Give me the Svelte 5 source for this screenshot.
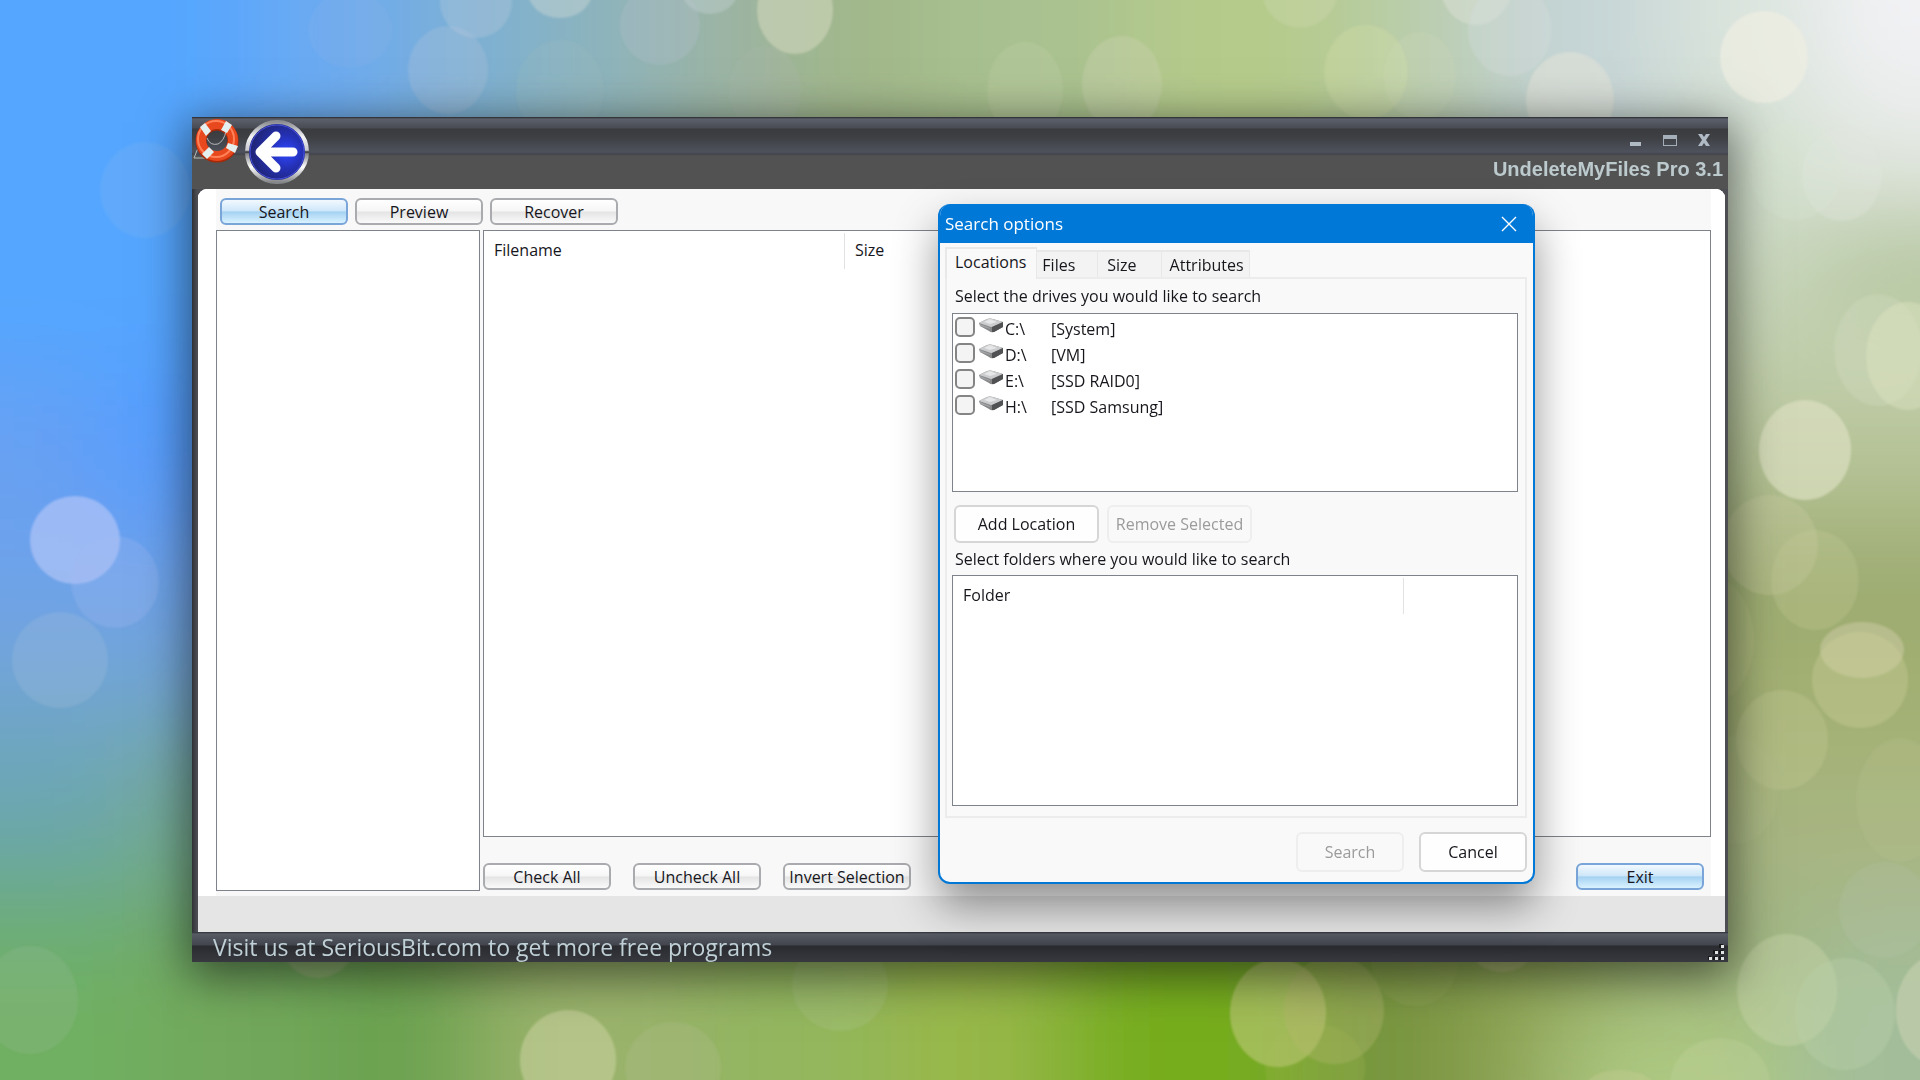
<script lang="ts">
  type Drive = { letter: string; label: string; checked: boolean };

  let drives: Drive[] = $state([
    { letter: 'C:\\', label: '[System]', checked: false },
    { letter: 'D:\\', label: '[VM]', checked: false },
    { letter: 'E:\\', label: '[SSD RAID0]', checked: false },
    { letter: 'H:\\', label: '[SSD Samsung]', checked: false }
  ]);

  const tabs = ['Locations', 'Files', 'Size', 'Attributes'];
  let activeTab = $state('Locations');
  let dialogOpen = $state(true);

  // wallpaper colour patches: x, y, width, height, fill
  const patches: [number, number, number, number, string][] = [
    [-200, -200, 500, 660, '#55a6ff'],
    [260, -200, 150, 400, '#6dabf0'],
    [410, -200, 130, 400, '#7db0d2'],
    [540, -200, 120, 400, '#8db4bc'],
    [660, -200, 120, 400, '#9bb4a4'],
    [780, -200, 150, 400, '#a1b78a'],
    [930, -200, 200, 400, '#a9c190'],
    [1130, -200, 230, 400, '#b5cb8b'],
    [1360, -200, 130, 400, '#bacdae'],
    [1490, -200, 170, 400, '#c5d4d6'],
    [1660, -200, 160, 400, '#dae4dd'],
    [1820, -200, 300, 300, '#f2f2f5'],
    [1820, 100, 300, 130, '#e2e7e1'],
    [1660, 120, 160, 180, '#cfdcc8'],
    [1660, 280, 460, 130, '#c3d0b0'],
    [1660, 400, 460, 130, '#b6c396'],
    [1660, 520, 460, 140, '#9cab70'],
    [1660, 650, 460, 150, '#a4b174'],
    [1660, 790, 460, 150, '#a7b684'],
    [-200, 380, 330, 150, '#68a0f2'],
    [100, 380, 200, 190, '#549cff'],
    [-200, 520, 500, 120, '#6ea3ea'],
    [-200, 630, 500, 110, '#72a5d4'],
    [-200, 730, 350, 150, '#6ca6b4'],
    [130, 730, 170, 220, '#76a992'],
    [-200, 860, 400, 100, '#6cab80'],
    [-200, 940, 380, 340, '#6fb062'],
    [150, 900, 180, 380, '#72a85c'],
    [320, 900, 160, 380, '#6ba24f'],
    [480, 900, 220, 380, '#9ab36c'],
    [700, 900, 180, 380, '#93b65e'],
    [880, 900, 180, 380, '#98b84a'],
    [1060, 900, 250, 380, '#76ad1c'],
    [1310, 900, 150, 380, '#789440'],
    [1460, 900, 170, 380, '#8da253'],
    [1560, 1000, 240, 280, '#adc982'],
    [1640, 900, 160, 100, '#9db17a'],
    [1790, 930, 330, 350, '#a3bd9a']
  ];

  // bokeh discs: cx, cy, rx, ry, fill, opacity
  const discs: [number, number, number, number, string, number][] = [
    [75, 540, 45, 44, '#bccaf8', 0.6],
    [115, 582, 44, 46, '#a8bcf4', 0.25],
    [60, 660, 48, 48, '#a8c0dc', 0.26],
    [30, 1000, 48, 54, '#a0c0a0', 0.2],
    [145, 190, 45, 48, '#8cb8ec', 0.2],
    [448, 70, 40, 44, '#b4c4dc', 0.3],
    [476, 2, 36, 36, '#b8c8dc', 0.35],
    [350, 30, 42, 38, '#9ab8e4', 0.15],
    [560, -8, 32, 26, '#ccd8d4', 0.45],
    [560, 90, 44, 50, '#a0bcbc', 0.2],
    [660, 25, 40, 40, '#b4c0cc', 0.3],
    [710, -10, 28, 24, '#ccd6dc', 0.35],
    [795, 10, 38, 44, '#ccd4b8', 0.65],
    [765, 90, 36, 44, '#b0b8b0', 0.2],
    [1025, 90, 38, 48, '#c8d4ac', 0.25],
    [1122, 84, 40, 48, '#d4d8b8', 0.3],
    [1300, -10, 38, 38, '#ccd8ac', 0.4],
    [1366, 72, 42, 47, '#d0dca4', 0.4],
    [1420, 76, 36, 44, '#d4dcc0', 0.2],
    [1476, -15, 36, 40, '#dce0d4', 0.5],
    [1510, 30, 42, 46, '#d4dcdc', 0.35],
    [1570, 100, 44, 48, '#e4e4d8', 0.55],
    [1764, 57, 44, 46, '#eeeee2', 0.75],
    [1842, 175, 40, 46, '#e4e8e0', 0.3],
    [1795, 170, 46, 50, '#dce6d4', 0.22],
    [1805, 450, 46, 50, '#dee2c4', 0.65],
    [1878, 350, 44, 56, '#dce2cc', 0.25],
    [1908, 356, 42, 54, '#e0e6c4', 0.4],
    [1770, 545, 48, 50, '#cfd2a8', 0.28],
    [1862, 650, 42, 28, '#d8d0b0', 0.45],
    [1860, 680, 48, 48, '#ced09c', 0.36],
    [1815, 580, 44, 50, '#ccd09c', 0.25],
    [1708, 640, 46, 64, '#bcc48c', 0.22],
    [1782, 740, 46, 50, '#c8cc98', 0.3],
    [1735, 790, 44, 54, '#b8c090', 0.18],
    [1900, 800, 44, 62, '#bcc898', 0.2],
    [1885, 910, 46, 48, '#b8c4ac', 0.22],
    [1787, 990, 50, 56, '#c8d4a8', 0.45],
    [1845, 1014, 50, 56, '#bed0ac', 0.35],
    [1940, 1010, 44, 56, '#ccd4b4', 0.55],
    [1278, 1013, 48, 54, '#c4cc80', 0.55],
    [1334, 1010, 50, 54, '#b4b870', 0.36],
    [1502, 950, 30, 22, '#b8b888', 0.4],
    [1415, 960, 44, 46, '#98a860', 0.25],
    [1315, 1068, 50, 44, '#a8bc58', 0.2],
    [1620, 1090, 36, 20, '#cccf94', 0.35],
    [1720, 1084, 50, 46, '#bfd29c', 0.35],
    [568, 1060, 48, 50, '#c8d09c', 0.6],
    [673, 1068, 48, 46, '#aebc8c', 0.3],
    [840, 985, 48, 46, '#aec488', 0.28],
    [318, 940, 38, 38, '#b4b890', 0.35]
  ];
</script>

<svelte:head>
  <title>UndeleteMyFiles Pro 3.1</title>
</svelte:head>

{#snippet driveIcon()}
  <svg class="drive-icon" viewBox="0 0 24 16" aria-hidden="true">
    <path d="M0 5 L8 1 Q11 0 14 1 L24 4 L24 9 L15 14 Q12 15 10 13 L1 8 Z" fill="#858788" />
    <path d="M0 5 L8 1 Q11 0 14 1 L24 4 L13 9 Q11 9 9 8 Z" fill="#cacccd" />
    <path d="M5 4 L11 1 L18 4 L11 6 Z" fill="#e6e7e8" />
    <path d="M13 9 L24 4 L24 9 L15 14 L13 14 Z" fill="#4f5152" />
    <path d="M1 6 L11 10 L11 11 L1 8 Z" fill="#a2a4a5" />
  </svg>
{/snippet}

<div class="desktop">
  <svg class="wallpaper" viewBox="0 0 1920 1080" preserveAspectRatio="xMidYMid slice" aria-hidden="true">
    <defs>
      <filter id="soft" filterUnits="userSpaceOnUse" x="-300" y="-300" width="2520" height="1680">
        <feGaussianBlur stdDeviation="52" />
      </filter>
      <filter id="edge">
        <feGaussianBlur stdDeviation="1" />
      </filter>
    </defs>
    <rect width="1920" height="1080" fill="#9cb47c" />
    <g filter="url(#soft)">
      {#each patches as [x, y, w, h, fill]}
        <rect {x} {y} width={w} height={h} {fill} />
      {/each}
    </g>
    <g filter="url(#edge)">
      {#each discs as [cx, cy, rx, ry, fill, opacity]}
        <ellipse {cx} {cy} {rx} {ry} {fill} {opacity} />
      {/each}
    </g>
  </svg>

  <main class="window">
    <header class="titlebar">
      <svg class="app-icon" viewBox="0 0 46 44" aria-hidden="true">
        <path d="M5 29 L1 39 L22 39" fill="none" stroke="#b9bcbc" stroke-width="1" />
        <circle cx="24" cy="22" r="16" fill="none" stroke="#a82808" stroke-width="11" />
        <circle cx="24" cy="21" r="16" fill="none" stroke="#e8481e" stroke-width="10" />
        <circle cx="23" cy="20" r="18" fill="none" stroke="#ff8158" stroke-width="2" />
        <path d="M14 19 Q17 27 25 25 Q31 22 33 12" fill="none" stroke="#b4b8ba" stroke-width="1" />
        <g fill="#e4f0f0">
          <path d="M7 8 L12 4 L18 12 L13 17 Z" />
          <path d="M33 2 L39 6 L34 14 L28 11 Z" />
          <path d="M45 27 L42 34 L33 29 L35 24 Z" />
          <path d="M14 40 L9 35 L16 28 L21 33 Z" />
        </g>
      </svg>
      <button class="back" aria-label="Back">
        <svg viewBox="0 0 66 64" aria-hidden="true">
          <defs>
            <linearGradient id="rim" x2="0" y2="1">
              <stop offset="0" stop-color="#8b8d92" />
              <stop offset="0.25" stop-color="#f4f4f6" />
              <stop offset="0.47" stop-color="#c8cacd" />
              <stop offset="0.5" stop-color="#2c2d30" />
              <stop offset="0.53" stop-color="#85878b" />
              <stop offset="0.75" stop-color="#ffffff" />
              <stop offset="1" stop-color="#85878b" />
            </linearGradient>
            <radialGradient id="disc" cx="0.65" cy="0.5" r="0.55">
              <stop offset="0" stop-color="#3048ff" />
              <stop offset="0.5" stop-color="#2430b4" />
              <stop offset="1" stop-color="#20267c" />
            </radialGradient>
          </defs>
          <circle cx="33" cy="32" r="30" fill="url(#disc)" stroke="url(#rim)" stroke-width="4" />
          <circle cx="33" cy="32" r="27" fill="none" stroke="#4750d8" stroke-width="1" />
          <path
            d="M32 16 L16 32 L32 48 M17 32 H49"
            fill="none"
            stroke="#fff"
            stroke-width="9"
            stroke-linecap="round"
            stroke-linejoin="round"
          />
        </svg>
      </button>
      <div class="title-side">
        <div class="controls">
          <button aria-label="Minimize">
            <svg viewBox="0 0 14 14" aria-hidden="true"><path d="M1 9h11v4H1z" fill="#b0bac4" /></svg>
          </button>
          <button aria-label="Maximize">
            <svg viewBox="0 0 14 14" aria-hidden="true">
              <path d="M0 2h14v11H0z M1 6v6h12V6z" fill="#a4aeb8" fill-rule="evenodd" />
            </svg>
          </button>
          <button aria-label="Close">
            <svg viewBox="0 0 14 14" aria-hidden="true">
              <path d="M1 1h4l2 3 2-3h4L9 7l4 6H9L7 10l-2 3H1l4-6z" fill="#b0bac4" />
            </svg>
          </button>
        </div>
        <h1>UndeleteMyFiles Pro 3.1</h1>
      </div>
    </header>

    <section class="content">
      <div class="work">
        <nav class="toolbar">
          <button class="glossy blue" onclick={() => (dialogOpen = true)}>Search</button>
          <button class="glossy">Preview</button>
          <button class="glossy">Recover</button>
        </nav>
        <div class="split">
          <div class="tree"></div>
          <div class="results">
            <div class="file-list">
              <table>
                <thead>
                  <tr>
                    <th class="col-filename">Filename</th>
                    <th>Size</th>
                  </tr>
                </thead>
              </table>
            </div>
            <div class="actions">
              <button class="glossy">Check All</button>
              <button class="glossy">Uncheck All</button>
              <button class="glossy">Invert Selection</button>
              <button class="glossy blue exit">Exit</button>
            </div>
          </div>
        </div>
      </div>
    </section>

    <footer class="statusbar">
      <a href="#seriousbit">Visit us at SeriousBit.com to get more free programs</a>
      <svg class="grip" viewBox="0 0 18 18" aria-hidden="true">
        <g fill="#17181a">
          <path d="M11 0h4v4h-4z M5 6h4v4H5z M11 6h4v4h-4z M0 12h3v4H0z M5 12h4v4H5z M11 12h4v4h-4z" />
        </g>
        <g fill="#e2e4e4">
          <path d="M13 1h3v3h-3z M7 7h3v3H7z M13 7h3v3h-3z M1 13h3v3H1z M7 13h3v3H7z M13 13h3v3h-3z" />
        </g>
      </svg>
    </footer>

    {#if dialogOpen}
      <div class="dialog" role="dialog" aria-labelledby="dialog-title">
        <div class="dialog-title">
          <h2 id="dialog-title">Search options</h2>
          <button aria-label="Close dialog" onclick={() => (dialogOpen = false)}>
            <svg viewBox="0 0 16 16" aria-hidden="true">
              <path d="M1 1 L15 15 M15 1 L1 15" stroke="#fff" stroke-width="1.4" />
            </svg>
          </button>
        </div>

        <div class="dialog-body">
          <div class="tabs" role="tablist">
            {#each tabs as tab}
              <button role="tab" aria-selected={activeTab === tab} class:active={activeTab === tab} onclick={() => (activeTab = tab)}>
                {tab}
              </button>
            {/each}
          </div>

          <div class="tab-panel" role="tabpanel">
            <p>Select the drives you would like to search</p>
            <ul class="drive-list">
              {#each drives as drive}
                <li>
                  <label>
                    <input type="checkbox" bind:checked={drive.checked} />
                    {@render driveIcon()}
                    <span class="letter">{drive.letter}</span>
                    <span>{drive.label}</span>
                  </label>
                </li>
              {/each}
            </ul>
            <div class="location-buttons">
              <button class="flat">Add Location</button>
              <button class="flat" disabled>Remove Selected</button>
            </div>
            <p class="folders-label">Select folders where you would like to search</p>
            <div class="folder-list">
              <table>
                <thead>
                  <tr>
                    <th class="col-folder">Folder</th>
                    <th></th>
                  </tr>
                </thead>
              </table>
            </div>
          </div>

          <div class="dialog-actions">
            <button class="flat" disabled>Search</button>
            <button class="flat" onclick={() => (dialogOpen = false)}>Cancel</button>
          </div>
        </div>
      </div>
    {/if}
  </main>
</div>

<style>
  :global(body) {
    margin: 0;
  }

  .desktop {
    position: relative;
    display: flex;
    box-sizing: border-box;
    min-height: 100vh;
    padding: 117px 10% 118px;
    overflow: hidden;
    font-family: 'Open Sans', 'Noto Sans', sans-serif;
    font-size: 16px;
    line-height: 20px;
    color: #16161c;
  }

  .desktop :is(h1, h2, p, ul, button, th) {
    margin: 0;
    padding: 0;
    font: inherit;
    color: inherit;
  }

  .wallpaper {
    position: absolute;
    inset: 0;
    width: 100%;
    height: 100%;
  }

  .window {
    position: relative;
    flex: 1;
    display: flex;
    flex-direction: column;
    background: linear-gradient(90deg, #303135, #4b4d53 5px, #4b4d53);
    box-shadow: 0 10px 44px 4px rgba(0, 0, 0, 0.55);
  }

  .titlebar {
    display: flex;
    align-items: flex-start;
    height: 72px;
    background: linear-gradient(
      #26272b 0,
      #5c606b 2px,
      #484b53 11px,
      #3a3b3e 12px,
      #3d3f43 20px,
      #4e525c 35px,
      #42444b 37px,
      #525252 39px
    );
  }

  .app-icon {
    width: 46px;
    height: 44px;
    margin: 2px 5px 0 1px;
  }

  .desktop .back {
    width: 66px;
    height: 64px;
    margin-top: 3px;
    border: 0;
    background: none;
  }

  .back svg {
    display: block;
  }

  .title-side {
    flex: 1;
    display: flex;
    flex-direction: column;
    align-items: flex-end;
    padding: 16px 5px 0 0;
  }

  .controls {
    display: flex;
    gap: 20px;
    padding-right: 12px;
  }

  .controls button {
    width: 14px;
    height: 14px;
    border: 0;
    background: none;
  }

  .controls svg {
    display: block;
  }

  .desktop h1 {
    margin-top: 10px;
    font: bold 20px/24px 'Liberation Sans', Arial, sans-serif;
    color: #bccace;
  }

  .content {
    flex: 1;
    display: flex;
    flex-direction: column;
    margin: 0 3px 0 6px;
    padding-bottom: 36px;
    border-radius: 9px 9px 0 0;
    background: #e5e5e5;
    overflow: hidden;
  }

  .work {
    flex: 1;
    display: flex;
    flex-direction: column;
    padding-bottom: 5px;
    border: solid #fff;
    border-width: 0 14px 0 18px;
    background: #f8f8f8;
  }

  .toolbar {
    display: flex;
    gap: 7px;
    padding: 9px 4px 5px;
  }

  .desktop .glossy {
    width: 128px;
    height: 27px;
    border: 2px solid #a9abae;
    border-radius: 6px;
    background: linear-gradient(#fff, #f6f6f6 48%, #e4e4e4 52%, #fafafa);
    line-height: 24px;
    white-space: nowrap;
  }

  .desktop .glossy.blue {
    border-color: #79a5d8;
    background: linear-gradient(#f2f9ff, #cfe7f9 46%, #a5d2f2 52%, #d9f2ff);
  }

  .split {
    flex: 1;
    display: flex;
    gap: 3px;
  }

  .tree,
  .file-list,
  .drive-list,
  .folder-list {
    box-sizing: border-box;
    border: 1px solid #7e828a;
    background: #fff;
  }

  .tree {
    width: 264px;
  }

  .results {
    flex: 1;
    display: flex;
    flex-direction: column;
  }

  .file-list {
    flex: 1;
    padding-top: 2px;
  }

  table {
    width: 100%;
    border-collapse: collapse;
  }

  .desktop th {
    height: 34px;
    padding: 0 0 2px 10px;
    text-align: left;
  }

  .desktop .col-filename {
    width: 350px;
    border-right: 1px solid #e2e2e2;
  }

  .actions {
    display: flex;
    gap: 22px;
    padding: 26px 7px 1px 0;
  }

  .exit {
    margin-left: auto !important;
  }

  .statusbar {
    display: flex;
    justify-content: space-between;
    align-items: flex-end;
    height: 30px;
    padding-left: 21px;
    background: linear-gradient(#2e3035 0, #575b64 2px, #42454e 13px, #2a2b2f 14px, #383940);
  }

  .statusbar a {
    font-size: 23px;
    line-height: 30px;
    color: #bfd0d6;
    text-decoration: none;
  }

  .grip {
    width: 18px;
    height: 18px;
    margin-right: 2px;
  }

  .dialog {
    position: absolute;
    top: 87px;
    right: 193px;
    box-sizing: border-box;
    width: 597px;
    border: 2px solid #0078d7;
    border-top: 0;
    border-radius: 12px;
    background: #f9f9f9;
    box-shadow: 0 22px 44px rgba(0, 0, 0, 0.42);
    overflow: hidden;
  }

  .dialog-title {
    display: flex;
    align-items: center;
    justify-content: space-between;
    height: 39px;
    padding: 0 16px 0 5px;
    background: #0078d7;
    color: #fff;
  }

  .desktop h2 {
    font-size: 17px;
  }

  .dialog-title button {
    width: 16px;
    height: 16px;
    border: 0;
    background: none;
  }

  .dialog-title svg {
    display: block;
  }

  .dialog-body {
    padding: 4px 6px 10px 5px;
  }

  .tabs {
    display: flex;
    align-items: flex-end;
    height: 30px;
  }

  .desktop .tabs button {
    height: 27px;
    padding: 0 5px;
    border: solid #e8e8e8;
    border-width: 2px 1px 0 0;
    background: #f3f3f3;
  }

  .desktop .tabs button:nth-child(2) {
    padding-right: 22px;
  }

  .desktop .tabs button:nth-child(3) {
    padding: 0 24px 0 9px;
  }

  .desktop .tabs button:nth-child(4) {
    padding-left: 8px;
  }

  .desktop .tabs button.active {
    height: 32px;
    margin-bottom: -2px;
    padding: 0 10px 4px 8px;
    border-left-width: 2px;
    background: #f9f9f9;
    z-index: 1;
  }

  .tab-panel {
    padding: 0 7px 10px 5px;
    border: 2px solid #ececec;
  }

  .desktop p {
    padding-left: 3px;
    line-height: 34px;
  }

  .desktop .folders-label {
    line-height: 32px;
  }

  .desktop .drive-list {
    min-height: 179px;
    padding: 3px 2px;
    list-style: none;
  }

  .drive-list label {
    display: flex;
    height: 26px;
  }

  .drive-list input {
    appearance: none;
    box-sizing: border-box;
    width: 20px;
    height: 20px;
    margin: 0 4px 0 0;
    border: 2px solid #858585;
    border-radius: 5px;
    background: #f4f4f4;
  }

  .drive-list input:checked {
    background: #0078d7;
  }

  .drive-icon {
    width: 24px;
    height: 16px;
    margin: 1px 2px 0 0;
  }

  .drive-list span {
    line-height: 24px;
  }

  .letter {
    width: 46px;
  }

  .location-buttons {
    display: flex;
    gap: 8px;
    padding: 13px 2px 0;
  }

  .desktop .flat {
    width: 108px;
    height: 40px;
    border: 2px solid #d6d6d6;
    border-radius: 6px;
    background: #fefefe;
  }

  .desktop .flat:disabled {
    border-color: #eeeeee;
    background: #f9f9f9;
    color: #9b9b9b;
  }

  .desktop .location-buttons .flat {
    width: 145px;
    height: 38px;
  }

  .folder-list {
    min-height: 231px;
    padding-top: 2px;
  }

  .desktop .col-folder {
    width: 440px;
    border-right: 1px solid #e2e2e2;
  }

  .dialog-actions {
    display: flex;
    justify-content: flex-end;
    gap: 15px;
    padding-top: 14px;
  }
</style>
